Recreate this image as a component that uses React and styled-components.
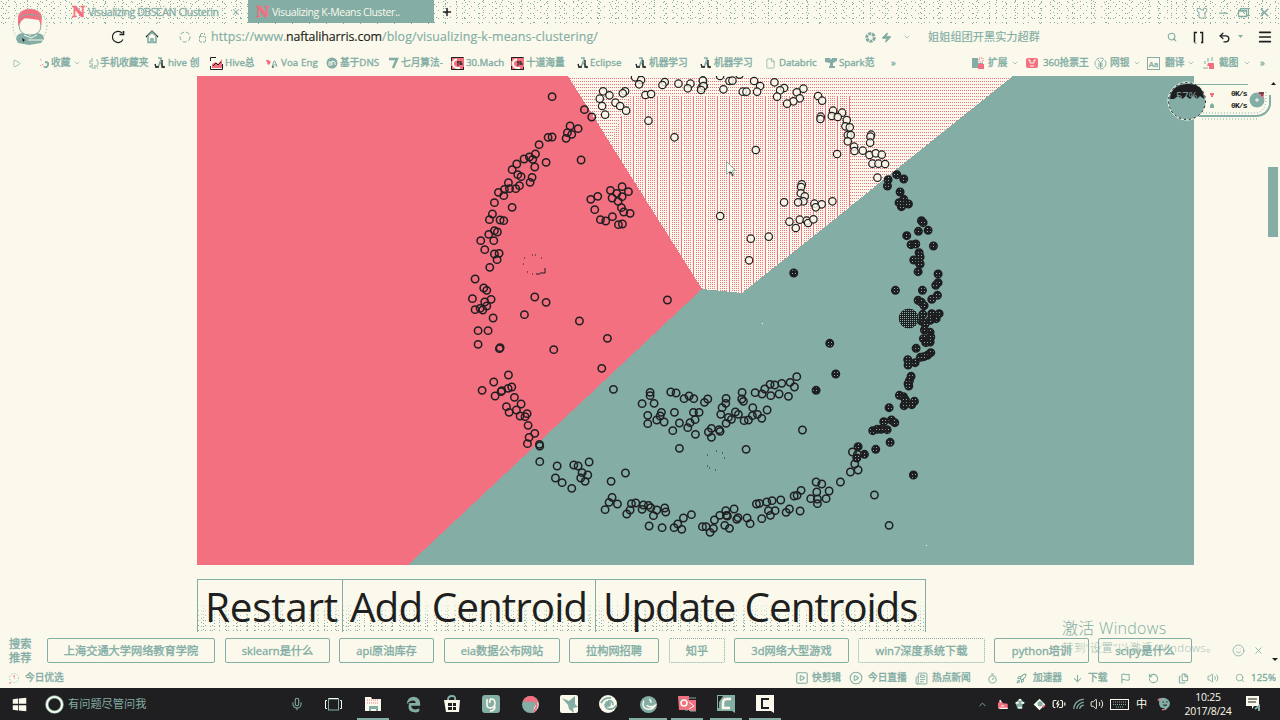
import React from "react";
import styled, { createGlobalStyle, css } from "styled-components";
import {
  X, Plus, Minus, Shirt, Zap, ChevronDown, ChevronUp, Search, Undo2, Menu, Play, File,
  CirclePlay, Newspaper, Rocket, ArrowDown, Flag, Volume2, Mic, RotateCcw, Smile,
  SquarePlay, Files, BatteryCharging, Timer,
} from "lucide-react";

const cream = "#faf9eb";
const teal = "#83ada5";
const pink = "#f27080";
const ink = "#1f1e20";

const dot = (c) => `conic-gradient(from 0deg at 1px 1px, transparent 75%, ${c} 0)`;
const speckle = css`
  background-image: ${dot(teal)}, ${dot(teal)}, ${dot(teal)}, ${dot(teal)}, ${dot(teal)}, ${dot(teal)};
  background-size: 13px 7px, 11px 9px, 17px 5px, 7px 11px, 19px 6px, 9px 8px;
  background-position: 1px 1px, 5px 4px, 3px 3px, 2px 6px, 8px 0, 6px 2px;
`;

const Global = createGlobalStyle`
  * { box-sizing: border-box; }
  body { margin: 0; background: ${cream}; overflow: hidden; }
  svg { display: block; flex: none; }
`;

const Screen = styled.div`
  width: 1280px;
  height: 720px;
  display: flex;
  flex-direction: column;
  position: relative;
  background: ${cream};
  color: ${teal};
  font-family: "Open Sans", "Noto Sans CJK SC", sans-serif;
  font-size: 11.2px;
  line-height: 1;
  white-space: nowrap;
`;

const Bar = styled.div`
  display: flex;
  align-items: center;
  flex: none;
  height: ${(p) => p.$h}px;
  padding-left: ${(p) => p.$start || 0}px;
  font-size: ${(p) => p.$size || 11.2}px;
  -webkit-text-stroke: ${(p) => p.$heavy || 0}px currentColor;
`;

const Slot = styled.div`
  flex: none;
  display: flex;
  align-items: center;
  height: 100%;
  width: ${(p) => p.$w}px;
  color: ${(p) => p.$color || "inherit"};
  letter-spacing: ${(p) => p.$ls || 0}px;
`;

/* Lays items out in a row; each item's width runs up to the start of the next. */
function Slots({ items, end = 1280 }) {
  return items.map((it, i) => (
    <Slot key={i} $w={(items[i + 1] ? items[i + 1].x : end) - it.x} $color={it.color} $ls={it.ls}>
      {it.el}
    </Slot>
  ));
}

/* ---------- tabs ---------- */
const TabStrip = styled.div`
  ${speckle}
  height: 24px;
  flex: none;
  display: flex;
  align-items: flex-start;
  padding-left: 66px;
`;
const Tab = styled.div`
  display: flex;
  align-items: center;
  height: 23px;
  width: ${(p) => p.$w}px;
  padding: 0 0 0 ${(p) => p.$pad}px;
  background: ${(p) => (p.$active ? teal : "transparent")};
  color: ${(p) => (p.$active ? cream : teal)};
  font-size: 10.5px;
  -webkit-text-stroke: ${(p) => (p.$active ? 0 : 0.3)}px currentColor;
`;
const TabTitle = styled.span`
  flex: none;
  width: ${(p) => p.$w}px;
  line-height: 20px;
  letter-spacing: ${(p) => p.$ls || 0}px;
`;
const Logo = styled.span`
  flex: none;
  width: 16px;
  font: 700 14.5px/20px "DejaVu Serif", serif;
  color: ${pink};
  -webkit-text-stroke: 0.6px ${pink};
`;
const NewTab = styled.div`
  margin-left: 7px;
  height: 23px;
  display: flex;
  align-items: center;
  color: ${ink};
`;
const WindowButtons = styled.div`
  margin-left: auto;
  height: 25px;
  padding-right: 9px;
  display: flex;
  align-items: center;
  gap: 9px;
`;
const Avatar = styled.div`
  position: absolute;
  left: 11px;
  top: 6px;
`;

function AvatarArt() {
  return (
    <svg width="38" height="42" viewBox="0 0 38 42">
      <circle cx="19" cy="20" r="17" fill={cream} stroke={teal} strokeDasharray="1 2" />
      <path d="M5 33q1-7 9-6l5 3 6-3q8 0 8 6l-3 4-12 2-11-2z" fill={teal} />
      <path d="M13 29l7 3 6-3M17 34h15" stroke={cream} strokeWidth="1" fill="none" />
      <path d="M8 19q0 10 11 10t11-10l-1-8-18 1z" fill={cream} stroke={teal} />
      <path d="M7 20V11q2-8 12-8t12 8l-1 9-2-6-14-2-4 3z" fill={pink} />
      <path d="M9 11q9-5 21 0" stroke={teal} fill="none" />
      <path d="M11 32l3 2-2 2z" fill={ink} />
    </svg>
  );
}

/* ---------- address bar ---------- */
const Url = styled.span`
  font-size: 12.4px;
  display: inline-flex;
  b { font-weight: 400; color: ${ink}; width: 96px; letter-spacing: -0.12px; }
  i { font-style: normal; width: 75px; letter-spacing: 0.1px; }
  em { font-style: normal; letter-spacing: 0.12px; }
`;
const Reload = () => (
  <svg width="14" height="14" viewBox="0 0 14 14" fill="none" stroke={teal} strokeWidth="1.6">
    <path d="M12 9.5A5.6 5.6 0 1 1 11 3" stroke={ink} strokeWidth="1.2" /><path d="M8.5 4.5h4V1" stroke={ink} />
  </svg>
);
const Home = () => (
  <svg width="14" height="14" viewBox="0 0 14 14" fill="none" stroke={teal} strokeWidth="1.6">
    <path d="M1 7l6-6 6 6" stroke={ink} strokeWidth="1.2" /><path d="M3 6v6.4h3V9h2v3.4h3V6L7 2z" />
  </svg>
);
const Frames = () => (
  <svg width="11" height="13" viewBox="0 0 11 13" fill="none" stroke={ink} strokeWidth="1.5">
    <path d="M4 1.5H1.500v10M7 1.5h2.500v10H8" /><path d="M1.500 12h2" stroke={teal} />
  </svg>
);
const Wheel = () => (
  <svg width="11" height="11" viewBox="0 0 11 11">
    <circle cx="5.5" cy="5.5" r="3.8" fill="none" stroke={teal} strokeWidth="3" strokeDasharray="3 .8" />
  </svg>
);
const Lock = () => (
  <svg width="9" height="11" viewBox="0 0 9 11" fill="none" stroke={teal} strokeDasharray="2 1">
    <path d="M1.5 4.500h6v5.500h-6zM2.500 4V1.500h4V4" />
  </svg>
);
const ic = { strokeWidth: 2, color: teal };
const address = [
  { x: 111, el: <Reload /> },
  { x: 145, el: <Home /> },
  { x: 179, el: <svg width="12" height="12"><circle cx="6" cy="6" r="5" fill="none" stroke={teal} strokeDasharray="4 2" /></svg> },
  { x: 198, el: <Lock /> },
  { x: 211, el: <Url><i>https://www.</i><b>naftaliharris.com</b><em>/blog/visualizing-k-means-clustering/</em></Url> },
  { x: 865, el: <Wheel /> },
  { x: 881, el: <Zap size={11} {...ic} fill={teal} /> },
  { x: 903, el: <ChevronDown size={8} {...ic} /> },
  { x: 928, el: "姐姐组团开黑实力超群" },
  { x: 1167, el: <Search size={10} {...ic} strokeWidth={2.600} /> },
  { x: 1193, el: <Frames /> },
  { x: 1218, el: <Undo2 size={13} color={ink} strokeWidth={2.4} /> },
  { x: 1238, el: <svg width="5" height="4"><path d="M0 0h5L2.500 3z" fill={teal} /></svg> },
  { x: 1257, el: <Menu size={16} color={ink} strokeWidth={2.500} /> },
];

/* ---------- bookmarks ---------- */
const Caption = styled.span`
  margin-left: ${(p) => p.$ml || 3}px;
  letter-spacing: ${(p) => p.$ls || 0}px;
`;
const Whale = () => (
  <svg width="11" height="12" viewBox="0 0 11 12" fill="none">
    <path d="M4 1h3v3M1 10q3 1 4-2l1-3 4 6" stroke={teal} strokeWidth="1.6" />
    <path d="M1 7l1 3h3M8 3v7h3" stroke={ink} strokeWidth="1.3" />
  </svg>
);
const RedC = () => (
  <svg width="13" height="13" viewBox="0 0 13 13">
    <rect width="13" height="13" fill={pink} />
    <path d="M.5 4V.5H12.5M.5 9v3.500h12V10" stroke={ink} fill="none" />
    <path d="M6 2.500Q2 3 2 6.500T6 11h3" fill="none" stroke={cream} strokeWidth="2" />
    <path d="M6 5h4M8 7h4M7 4v5M10 4v4" stroke={ink} />
  </svg>
);
const HiveMark = () => (
  <svg width="13" height="13" viewBox="0 0 13 13">
    <path d="M.5 4V.5H6M.5 9v3.500h12V7" stroke={ink} fill="none" />
    <path d="M2 7l4-2 2 2 4-5v9H2z" fill={pink} /><path d="M3 9l3-3 2 2 3-3" stroke={ink} fill="none" />
  </svg>
);
const BlueDisc = () => (
  <svg width="12" height="12"><circle cx="6" cy="6" r="5.500" fill={teal} /><path d="M3 9V5h2v4M6 8V4l3 1v3" stroke={cream} fill="none" /></svg>
);
const Seven = () => (
  <svg width="11" height="12"><path d="M1 2h8L5 11" stroke={teal} strokeWidth="2.500" fill="none" /></svg>
);
const Hub = () => (
  <svg width="12" height="10"><path d="M0 0h5l1 2 1-2h5v3L8 5v3h2v2H4V8h1V5L0 4z" fill={teal} /></svg>
);
const HeartA = () => (
  <svg width="13" height="10"><path d="M0 2h3v1h2V2l-1 4-2 1z" fill={pink} /><path d="M6 9l2-6h1l2 6M7 7h4" stroke={teal} fill="none" /><path d="M6 9h2" stroke={ink} /></svg>
);
const Blocks = () => (
  <svg width="12" height="12"><path d="M0 1h6v5h5v5H0z" fill={teal} /><path d="M7 1h4v4H7z" fill="none" stroke={pink} strokeDasharray="1 1" /><path d="M6 7h6v5H6z" fill={pink} /></svg>
);
const Ticket = () => (
  <svg width="12" height="12"><rect y="1" width="12" height="10" rx="2" fill={pink} /><path d="M2 3h2v3h4V3h2M4 9h4" stroke={cream} fill="none" /></svg>
);
const Yen = () => (
  <svg width="13" height="13" fill="none" stroke={teal}><circle cx="6.500" cy="6.500" r="5.500" strokeDasharray="4 1" /><path d="M4 3l2.500 3L9 3M6.500 6v5M4 7h5M4 9h5" /></svg>
);
const AdMark = styled.span`
  width: 13px;
  height: 13px;
  border: 1px solid ${teal};
  font: 8px/11px "Open Sans", sans-serif;
  text-align: center;
`;
const Scissor = () => (
  <svg width="12" height="12"><path d="M0 11h5M5 1v4M2 4v3M9 0v4" stroke={teal} /><path d="M5 6h6v6H6V9H4z" fill={pink} /></svg>
);
const Star = () => (
  <svg width="10" height="10"><path d="M1 1l2 2M3 6l2 3M1 7l1 1" stroke={pink} strokeDasharray="1 1" /><path d="M6 4q4 0 3 3T5 9" stroke={teal} strokeWidth="2" fill="none" /></svg>
);
const Phone = () => (
  <svg width="10" height="12" fill="none" stroke={teal}><path d="M3 1v8h6V3H7M1 3v7h2v1h6" strokeDasharray="4 1" /></svg>
);
const Down = () => <ChevronDown size={8} {...ic} />;
const bm = (x, icon, text, ml = 3, ls = 0) => ({ x, el: <>{icon}<Caption $ml={ml} $ls={ls}>{text}</Caption></> });
const bookmarks = [
  { x: 12, el: <Play size={9} {...ic} /> },
  bm(39, <Star />, "收藏", 2),
  { x: 73, el: <Down /> },
  bm(89, <Phone />, "手机收藏夹", 1),
  bm(154, <Whale />, "hive 创", 3, 0.1),
  bm(210, <HiveMark />, "Hive总", 2),
  bm(266, <HeartA />, "Voa Eng", 2, 0.1),
  bm(326, <BlueDisc />, "基于DNS", 2),
  bm(388, <Seven />, "七月算法-", 2),
  bm(451, <RedC />, "30.Mach", 2),
  bm(511, <RedC />, "十道海量", 2),
  bm(577, <Whale />, "Eclipse", 2, 0.1),
  bm(635, <Whale />, "机器学习", 3),
  bm(700, <Whale />, "机器学习", 3),
  bm(765, <File size={11} color={teal} strokeWidth={1.6} />, "Databric", 3, -0.1),
  bm(825, <Hub />, "Spark范", 2),
  { x: 891, el: "»" },
  bm(972, <Blocks />, "扩展", 4),
  { x: 1011, el: <Down /> },
  bm(1026, <Ticket />, "360抢票王", 5),
  bm(1094, <Yen />, "网银", 3),
  { x: 1133, el: <Down /> },
  bm(1147, <AdMark>Aa</AdMark>, "翻译", 5),
  { x: 1187, el: <Down /> },
  bm(1203, <Scissor />, "截图", 4),
  { x: 1243, el: <Down /> },
  { x: 1260, el: "»" },
];

/* ---------- page ---------- */
const Viewport = styled.div`
  height: 556px;
  flex: none;
  display: flex;
  overflow: hidden;
`;
const Article = styled.div`
  width: 997px;
  margin-left: 197px;
`;
const ScrollTrack = styled.div`
  margin-left: auto;
  width: 12px;
  padding-top: 5px;
  display: flex;
  flex-direction: column;
`;
const Thumb = styled.div`
  width: 10px;
  height: 70px;
  margin-top: 82px;
  background: ${teal};
`;
const ButtonRow = styled.div`
  display: flex;
  margin-top: 14px;
  height: 53px;
`;
const BigButton = styled.button`
  flex: none;
  width: ${(p) => p.$w}px;
  padding: 0 0 0 ${(p) => p.$pad}px;
  border: 1px solid ${teal};
  border-width: 1px ${(p) => (p.$last ? 1 : 0)}px 0 1px;
  background: linear-gradient(${cream} 38%, transparent 85%), ${dot(teal)} 0 0 / 7px 5px, ${dot(teal)} 3px 2px / 9px 4px, ${dot(teal)} 5px 1px / 11px 3px, ${cream};
  text-align: left;
  color: ${ink};
  font: 400 40.5px/54px "Open Sans", sans-serif;
  letter-spacing: ${(p) => p.$ls}px;
  white-space: nowrap;
`;

/* Sample points, grouped by region: origin in page pixels, offsets in thirds of a pixel. */
const clusters = [
  { kind: "open", at: [460, 76], pts: "276,62 373,101 395,123 330,150 354,158 322,170 335,175 318,187 276,183 264,184 237,206 363,252 226,234 208,243 218,250 192,249 258,259 224,273 170,264 156,281 173,296 183,302 216,304 210,319 145,320 178,329 148,338 167,338 133,340 115,349 131,359 103,380 156,394 97,414 88,431 120,432 131,434 103,464 112,468 86,475 101,494 62,494 74,521 103,534 117,532 111,551 486,332 451,343 505,347 470,352 456,366 486,362 474,376 413,361 392,370 404,401 484,395 491,408 510,412 457,422 421,431 437,435 475,446 487,444" },
  { kind: "light", at: [460, 76], pts: "429,46 448,58 419,68 466,80 480,90 426,90 498,104 435,116 495,46 488,52 525,4 543,12 537,25 556,57 573,54 614,18 607,27 655,23 565,134 643,184 691,23 683,37 729,14 724,35 731,30" },
  { kind: "light", at: [700, 76], pts: "8,14 10,30 3,42 60,0 70,40 88,15 97,14 118,-4 162,15 180,30 171,47 128,47 139,47 223,19 252,36 240,43 231,62 310,38 290,49 299,67 280,76 261,83 354,60 366,74 362,122 361,129 399,104 426,110 395,120 413,123 440,132 436,151 449,154 443,177 452,177 443,196 462,212 463,225 411,234 488,224 513,176 511,182 510,200 508,237 527,232 545,236 517,263 535,263 555,264 532,305 167,222 60,420 152,488 206,482 147,553 305,325 303,333 302,352 314,361 310,376 294,379 252,379 343,383 365,385 347,394 397,376 268,437 299,431 320,434 324,441 340,430 287,456" },
  { kind: "dark", at: [700, 76], pts: "590,296 611,309 564,311 562,330 600,348 611,370 597,380 625,384 604,392 664,434 669,440 655,466 684,463 620,479 633,506 647,504 700,510 657,530 660,543 641,552 658,562" },
  { kind: "open", at: [460, 260], pts: "89,22 45,57 71,84 80,91 37,116 93,118 74,126 45,149 60,145 80,138 68,150 99,174 54,212 84,212 54,253 118,266 120,263 224,111 258,127 193,164 358,183 281,269 442,235 622,120 425,325 460,388 145,345 101,366 66,391 155,381 144,385 125,392 123,395 105,408 163,412 183,432 139,440 169,450 147,457 180,468 201,461 195,470 204,496 224,520 207,532 202,551 238,553 239,558 570,397 570,407 546,431 582,430 563,466 604,457 600,468 563,491 590,480 612,486 643,457 632,396 648,399 672,416 687,408 701,416 658,489 638,512 683,503 690,488 705,479 700,457 706,523 658,565" },
  { kind: "open", at: [700, 260], pts: "13,427 23,417 -3,457 78,415 77,430 66,443 62,463 85,472 94,478 78,490 106,456 115,463 132,482 145,480 158,443 157,467 172,463 185,475 201,450 126,397 125,417 130,424 34,505 25,516 34,532 60,514 57,509 165,398 194,387 186,402 210,373 212,407 224,375 245,370 237,402 270,367 290,350 283,381 265,409 307,510 138,568" },
  { kind: "dark", at: [700, 260], pts: "281,39 389,250 407,342 348,391 586,91 714,42 714,68 707,76 667,91 712,106 695,118 654,35 660,12 654,121 664,127 672,137 668,163 695,161 717,161 708,176 690,181 664,183 675,192 673,210 690,217 670,236 692,231 690,246 677,248 648,265 692,278 682,286 661,292 671,290 645,308 623,299 624,315 633,349 628,362 624,371 626,378 598,406 610,410 643,424 635,434 612,437 616,420 567,443 574,480 584,488 551,485 561,509 543,508 518,512 531,508 570,547 474,560 527,568" },
  { kind: "open", at: [520, 420], pts: "59,125 111,138 106,174 126,188 155,205 161,135 174,138 207,126 186,158 182,174 203,165 195,184 273,184 316,159 276,232 267,247 292,252 255,269 320,282 334,251 347,249 330,270 370,255 366,268 385,256 392,263 410,270 400,287 434,264 437,276 387,318 426,323 462,323 473,312 485,328 490,294 514,284 547,320 558,320 580,325 570,337 583,300 599,286 619,286" },
  { kind: "open", at: [720, 420], pts: "17,272 22,288 42,267 28,325 14,316 50,298 54,293 81,294 90,311 125,296 109,252 118,250 140,246 156,242 182,240 145,272 165,272 151,286 198,277 208,267 240,273 222,228 231,226 243,211 288,186 305,192 361,186 290,216 327,213 272,236 292,237 318,236 292,251 397,96 412,103 404,132 391,156 414,150 463,225 507,316" },
  { kind: "dark", at: [720, 420], pts: "433,103 410,114 580,165" },
];
const looks = {
  open: { fill: "none", stroke: ink, strokeWidth: 1.500 },
  light: { fill: cream, fillOpacity: 0.8, stroke: ink, strokeWidth: 1.200 },
  dark: { fill: "url(#dense)", stroke: ink, strokeWidth: 1.600 },
};

function Chart() {
  return (
    <svg width="997" height="489" viewBox="197 76 997 489">
      <defs>
        <pattern id="weave" width="12" height="2" patternUnits="userSpaceOnUse">
          <rect width="12" height="2" fill={cream} />
          <path d="M0 0h1v1H0zM2 0h1v1H2zM4 0h1v1H4zM6 0h1v1H6zM9 0h1v2h-1z" fill={pink} shapeRendering="crispEdges" />
        </pattern>
        <pattern id="rows" width="2" height="3" patternUnits="userSpaceOnUse">
          <rect width="2" height="3" fill={cream} />
          <rect width="1" height="1" fill={pink} />
        </pattern>
        <pattern id="dense" width="3" height="3" patternUnits="userSpaceOnUse">
          <rect width="3" height="3" fill={ink} />
          <rect width="1" height="1" fill={teal} />
        </pattern>
        <pattern id="mesh" width="2" height="2" patternUnits="userSpaceOnUse">
          <rect width="2" height="2" fill={ink} />
          <rect width="1" height="1" fill={teal} />
        </pattern>
      </defs>
      <rect x="197" y="76" width="997" height="489" fill={teal} />
      <path d="M197 76H568L702 289L408 565H197z" fill={pink} shapeRendering="crispEdges" />
      <path d="M568 76H1013L742 293L702 289z" fill="url(#rows)" shapeRendering="crispEdges" />
      <path d="M610 143L630 96H850V207L742 293L702 289z" fill="url(#weave)" shapeRendering="crispEdges" />
      {clusters.map((c, i) => (
        <g key={i} {...looks[c.kind]}>
          {c.pts.split(" ").map((p, j) => {
            const [x, y] = p.split(",").map(Number);
            return <circle key={j} cx={c.at[0] + x / 3 + 0.1} cy={c.at[1] + y / 3} r="3.7" />;
          })}
        </g>
      ))}
      <circle cx="908.700" cy="318.500" r="10" fill="url(#mesh)" />
      <path d="M524 258h1M541 258h1M532 255h1M535 255h1M523 264h1M527 272h1M532 274h1M536 274h4M545 268v5h-5" stroke={ink} fill="none" />
      <path d="M707 455h1M716 451h1M722 453h1M724 458h1M707 466h1M709 468h1M715 470h1" stroke={ink} />
      <path d="M762 323.500h1M926 545.500h1" stroke={cream} />
      <path d="M726.500 161.500v13l3-3 2 4 2-1-1-4h3z" fill={cream} stroke={teal} />
      <path d="M729 173l2-1 2 4" stroke={ink} fill="none" />
    </svg>
  );
}

/* ---------- network widget ---------- */
const Widget = styled.div`
  position: absolute;
  left: 1166px;
  top: 79px;
  width: 106px;
  height: 44px;
`;
const Speeds = styled.div`
  position: absolute;
  left: 65px;
  top: 9px;
  font: 700 8px/12px "Liberation Mono", monospace;
  letter-spacing: -0.9px;
  color: ${ink};
`;
const Percent = styled.span`
  position: absolute;
  left: 10px;
  top: 10px;
  font: 11px/14px "Open Sans", sans-serif;
  color: ${teal};
`;
function NetWidget() {
  return (
    <Widget>
      <svg width="106" height="44" viewBox="0 0 106 44">
        <path d="M28 5.500H90Q103 9 103 22T90 37H28z" fill={cream} />
        <path d="M28 5.500H82" stroke={teal} />
        <path d="M104 16v10Q101 37 90 37H30" stroke={teal} strokeWidth="2" fill="none" />
        <path d="M100 13v10Q98 34 88 34H34M36 40H92" stroke={teal} strokeDasharray="1 2" fill="none" />
        <circle cx="21" cy="22" r="19" fill={teal} stroke={cream} />
        <circle cx="21" cy="22" r="18.500" fill="none" stroke={ink} strokeDasharray="2 3" />
        <path d="M4 20Q5 6 21 5t17 15l-4-3-3 3-4-3-3 3-4-3-4 3-4-3-4 3z" fill={ink} />
        <path d="M44 14h4v2h-1v2h-2v-2h-1z" fill={pink} />
        <path d="M46 24l2 2v3h-4v-3z" fill={teal} />
        <circle cx="91" cy="21" r="7.500" fill={teal} />
        <path d="M91 19v4M89 21h4" stroke={cream} />
        <path d="M92 13h6v4l-2 2z" fill={pink} /><path d="M93 14h5M96 14v3" stroke={ink} />
      </svg>
      <Percent>57%</Percent>
      <Speeds>0K/s<br />0K/s</Speeds>
    </Widget>
  );
}

/* ---------- search suggestions ---------- */
const Suggest = styled.div`
  height: 36px;
  flex: none;
  display: flex;
  padding: 6px 0 0 9px;
  -webkit-text-stroke: 0.35px currentColor;
`;
const SuggestLabel = styled.div`
  width: 38px;
  line-height: 13.500px;
  margin-top: -1px;
`;
const Chip = styled.div`
  flex: none;
  width: ${(p) => p.$w}px;
  height: 25px;
  margin-right: ${(p) => p.$gap}px;
  border: 1px ${(p) => (p.$dotted ? "dotted" : "solid")} ${teal};
  border-radius: 2px;
  text-align: center;
  line-height: 24px;
`;
const chips = [
  ["上海交通大学网络教育学院", 168, 10], ["sklearn是什么", 105, 9], ["api原油库存", 95, 10],
  ["eia数据公布网站", 116, 9], ["拉构网招聘", 90, 10], ["知乎", 56, 9, true],
  ["3d网络大型游戏", 115, 9], ["win7深度系统下载", 127, 9, true], ["python培训", 95, 9], ["scipy是什么", 94, 40],
];
const Watermark = styled.div`
  position: absolute;
  left: 1062px;
  top: 619px;
  color: ${teal};
  font-size: 16px;
  font-weight: 300;
  line-height: 19px;
  letter-spacing: 0.3px;
  p { margin: 0; font-size: 11.500px; line-height: 20px; opacity: 0.75; letter-spacing: 0.4px; }
`;
const SuggestEnd = styled.div`
  height: 25px;
  display: flex;
  align-items: center;
  gap: 8px;
`;
const PageDown = styled.div`
  margin-top: 18px;
`;

/* ---------- status bar ---------- */
const s11 = { size: 11, strokeWidth: 2.200, color: teal };
const status = [
  { x: 8, el: <svg width="13" height="13"><circle cx="6" cy="6" r="4.500" fill="none" stroke={teal} strokeDasharray="1 2" /><path d="M5 4h2M1 11h2M6 6h1" stroke={pink} /></svg> },
  { x: 25, el: "今日优选" },
  { x: 795, el: <SquarePlay size={14} strokeWidth={1.800} color={teal} /> },
  { x: 812, el: "快剪辑" },
  { x: 849, el: <CirclePlay size={14} strokeWidth={1.800} color={teal} /> },
  { x: 868, el: "今日直播" },
  { x: 915, el: <Newspaper size={13} strokeWidth={1.800} color={teal} /> },
  { x: 932, el: "热点新闻" },
  { x: 987, el: <Timer {...s11} /> },
  { x: 1016, el: <Rocket {...s11} /> },
  { x: 1033, el: "加速器" },
  { x: 1072, el: <ArrowDown {...s11} /> },
  { x: 1088, el: "下载" },
  { x: 1120, el: <Flag {...s11} /> },
  { x: 1148, el: <RotateCcw {...s11} /> },
  { x: 1178, el: <Files {...s11} /> },
  { x: 1207, el: <Volume2 size={12} strokeWidth={1.800} color={teal} /> },
  { x: 1235, el: <Search size={10} strokeWidth={2} color={teal} /> },
  { x: 1251, el: "125%", ls: 0.1 },
];

/* ---------- taskbar ---------- */
const Taskbar = styled(Bar)`
  background: ${ink};
`;
const AppTile = styled.div`
  width: ${(p) => p.$w || 32}px;
  height: 100%;
  display: flex;
  justify-content: center;
  align-items: center;
  box-shadow: ${(p) => (p.$open ? `inset 0 -2px ${teal}` : "none")};
`;
const Clock = styled.div`
  width: 60px;
  text-align: center;
  line-height: 14.500px;
  font-size: 10.500px;
  color: ${cream};
  letter-spacing: -0.3px;
`;
const G = ({ children, s = 20 }) => <svg width={s} height={s} viewBox="0 0 20 20" fill="none">{children}</svg>;
const app = (x, art, open, w) => ({ x, el: <AppTile $open={open} $w={w}>{art}</AppTile> });
const tasks = [
  { x: 12, el: <G s={15}><path d="M1 3l7-1v7H1zM9 2l10-1v8H9zM1 11h7v7l-7-1zM9 11h10v8L9 18z" fill={cream} /></G> },
  { x: 45, el: <G s={19}><circle cx="10" cy="10" r="8" stroke={teal} strokeWidth="3.500" /><circle cx="10" cy="10" r="8" stroke={cream} strokeWidth="2" /></G> },
  { x: 68, el: "有问题尽管问我" },
  { x: 290, el: <Mic size={14} strokeWidth={1.800} color={teal} /> },
  { x: 325, el: <svg width="17" height="13" fill="none"><rect x="3.500" y="1" width="10" height="11" stroke={teal} /><path d="M3.500 .5h10M2 2.500H.5v8H2M15 2.500h1.500v8H15" stroke={cream} /></svg> },
  app(357, <G><path d="M2 3h6l1 2h9v12H2z" fill={cream} /><path d="M4 6h12M4 9h12" stroke={pink} strokeDasharray="1 1" /><path d="M6 17v-5h9v5h-2v-2H8v2z" fill={teal} /></G>, true),
  app(397, <G s={18}><path d="M3 10Q4 2 11 2q7 1 7 8v2H8q0 4 5 4l4-1v3q-3 2-7 1-5-1-5-6t5-6M8 9h5q0-3-3-3-4 0-7 4" fill={teal} /></G>),
  app(436, <G><path d="M2 6h16l-1 12H4z" fill={cream} /><path d="M6 6q0-4 4-4t3 4" stroke={teal} strokeWidth="2" /><path d="M6 9h4v3H6zM11 9h3v3h-3zM6 13h4v3H6zM11 13h3v3h-3z" fill={ink} /></G>),
  app(475, <G><rect x="1" y="1" width="18" height="18" rx="3" fill={teal} /><path d="M6 5v6q0 3 4 3 4-1 4-5 0-4-4-4-2 1-1 4M9 17q5 0 5-5" stroke={cream} strokeWidth="1.600" /></G>),
  app(514, <G s={19}><circle cx="10" cy="10" r="9" fill={teal} /><path d="M2 7q2-6 8-6t8 6H11z" fill={pink} /><path d="M18 7q2 8-6 12l3-8z" fill={cream} /><path d="M15 6q4 6-2 12" stroke={pink} strokeWidth="2" /></G>),
  app(553, <G><rect x="1" y="1" width="18" height="18" rx="2" fill={cream} /><path d="M3 4l7 3 6-5v8l3 3-5 1 1 5-5-4-1-4z" fill={teal} /></G>),
  app(592, <G><circle cx="10" cy="10" r="9" fill={cream} /><circle cx="10" cy="10" r="3" fill={teal} /><path d="M3 9q3-6 10-5M7 10q0 6 7 5 3-1 5-4M10 7q5-1 5 4" stroke={teal} strokeWidth="1.800" /></G>),
  app(629, <G s={19}><circle cx="10" cy="10" r="9" fill={teal} /><path d="M5 6q-3 8 5 9 5 0 7-4-5 3-9 0M11 4l2 4" stroke={cream} strokeWidth="1.600" /></G>, true, 38),
  app(671, <G><path d="M1 2h11v14H2zM12 6h7v11h-7z" fill={pink} /><circle cx="7" cy="9" r="3" stroke={cream} strokeWidth="1.600" /><path d="M12 4h7M13 17h6M2 6h3M8 16h3" stroke={teal} /><path d="M12 8l5 4-5 3" stroke={cream} /></G>, true),
  app(710, <G><path d="M1 1h18v18l-3-2H1z" fill={teal} /><path d="M15 5H11q-4 0-4 4v5h7" stroke={cream} strokeWidth="2.500" /><path d="M2 2h5L3 8v6H2z" fill={ink} /></G>, true),
  app(749, <G><path d="M1 1h18v18l-3-2H1z" fill={cream} /><path d="M14 5H7v9h7" stroke={ink} strokeWidth="2" /></G>, true),
  { x: 977, el: <ChevronUp size={11} strokeWidth={2} color={teal} /> },
  { x: 996, el: <G s={13}><path d="M3 9l3-6 5 5 7 1v7H3z" fill={pink} /><path d="M6 3l2 4M5 16h13M8 12h4" stroke={cream} strokeWidth="2" /></G> },
  { x: 1014, el: <G s={12}><path d="M2 8l8-7 8 7-4 3v7H6z" fill={teal} /><path d="M3 8h5M12 8h5M8 3h4M7 16h6" stroke={cream} strokeWidth="3" /></G> },
  { x: 1033, el: <G s={13}><path d="M10 1l9 9-9 9-9-9z" fill={cream} /><circle cx="11" cy="9" r="4" fill={teal} /><path d="M15 14l3-3" stroke={pink} strokeWidth="3" /></G> },
  { x: 1052, el: <BatteryCharging size={14} strokeWidth={2} color={cream} /> },
  { x: 1073, el: <G s={12}><path d="M1 18Q3 4 18 2M6 18q2-9 12-11M11 18q1-5 7-6" stroke={teal} strokeWidth="2" /></G> },
  { x: 1090, el: <Volume2 size={14} strokeWidth={1.600} color={cream} /> },
  { x: 1110, el: <svg width="19" height="11" fill="none"><rect x=".5" y=".5" width="18" height="10" stroke={cream} /><path d="M3 3h13M3 5.500h13M6 8h7" stroke={teal} strokeDasharray="1 1" /></svg> },
  { x: 1136, el: "中", color: cream },
  { x: 1157, el: <G s={14}><path d="M3 3q7-4 13 1 5 6 0 11l-4 4-2-3q-7 0-7-7z" fill={teal} /><path d="M1 5l4-3M7 18h4" stroke={pink} strokeWidth="2" /><path d="M8 7h2M13 7h2M9 11q3 2 5 0" stroke={ink} strokeWidth="1.500" /></G> },
  { x: 1178, el: <Clock>10:25<br />2017/8/24</Clock> },
  { x: 1246, el: <svg width="18" height="18"><path d="M0 1h13v10H8l-2 3v-3H0z" fill={cream} /><path d="M2 4h9M2 7h8" stroke={ink} /><path d="M9 14l4-3v5" stroke={teal} strokeWidth="2" fill="none" /></svg> },
];

export default function App() {
  return (
    <Screen>
      <Global />
      <TabStrip>
        <Tab $w={182} $pad={6}>
          <Logo>N</Logo>
          <TabTitle $w={133} $ls={-0.4}>Visualizing DBSCAN Clusterin</TabTitle>
          <X size={10} strokeWidth={2.500} color={teal} style={{ marginLeft: 10 }} />
        </Tab>
        <Tab $active $w={186} $pad={8}>
          <Logo>N</Logo>
          <TabTitle $w={140} $ls={-0.4}>Visualizing K-Means Cluster..</TabTitle>
        </Tab>
        <NewTab><Plus size={12} strokeWidth={3} /></NewTab>
        <WindowButtons>
          <Shirt size={12} strokeWidth={2} color={teal} />
          <Minus size={12} strokeWidth={2.500} color={teal} />
          <svg width="11" height="10" fill="none" stroke={teal}><path d="M2.500 2V.5h8v7H9M.5 2.500h8v6h-8zM0 3h9" strokeWidth="1.300" /></svg>
          <X size={13} strokeWidth={3} color={teal} />
        </WindowButtons>
      </TabStrip>
      <Bar $h={26} $start={111} $heavy={0.15}><Slots items={address} /></Bar>
      <Bar $h={26} $start={12} $size={9.7} $heavy={0.35}><Slots items={bookmarks} /></Bar>

      <Viewport>
        <Article>
          <Chart />
          <ButtonRow>
            <BigButton $w={145} $pad={7} $ls={-0.3}>Restart</BigButton>
            <BigButton $w={253} $pad={7} $ls={-1}>Add Centroid</BigButton>
            <BigButton $w={331} $pad={7} $ls={-1.1} $last>Update Centroids</BigButton>
          </ButtonRow>
        </Article>
        <ScrollTrack>
          <svg width="10" height="4"><path d="M3 4l2.500-3L8 4z" fill={ink} /></svg>
          <Thumb />
        </ScrollTrack>
      </Viewport>

      <Suggest>
        <SuggestLabel>搜索<br />推荐</SuggestLabel>
        {chips.map(([t, w, gap, dotted]) => (
          <Chip key={t} $w={w} $gap={gap} $dotted={dotted}>{t}</Chip>
        ))}
        <SuggestEnd>
          <Smile size={13} strokeWidth={1.500} color={teal} />
          <X size={11} strokeWidth={1.800} color={teal} />
          <PageDown><svg width="6" height="4"><path d="M0 0h6L3 3z" fill={ink} /></svg></PageDown>
        </SuggestEnd>
      </Suggest>
      <Bar $h={20} $start={8} $size={9.7} $heavy={0.35}><Slots items={status} /></Bar>
      <Taskbar $h={32} $start={12}><Slots items={tasks} /></Taskbar>

      <Avatar><AvatarArt /></Avatar>
      <NetWidget />
      <Watermark>激活 Windows<p>转到“设置”以激活 Windows。</p></Watermark>
    </Screen>
  );
}
